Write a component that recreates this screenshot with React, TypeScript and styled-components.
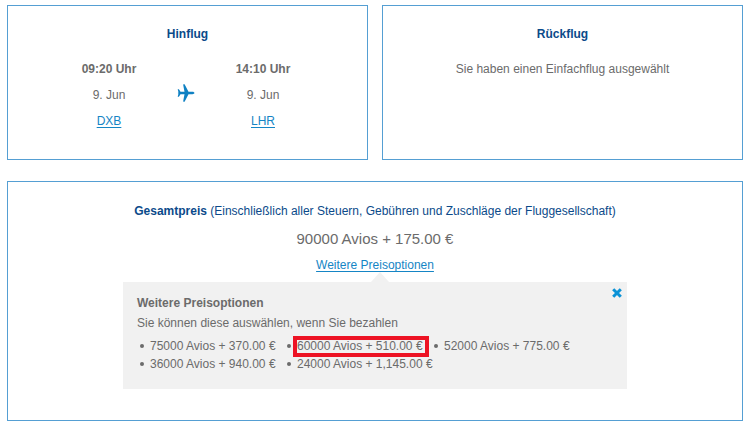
import React from "react";
import styled, { createGlobalStyle } from "styled-components";

const GlobalStyle = createGlobalStyle`
  *, *::before, *::after { box-sizing: border-box; }
  body {
    margin: 0;
    background: #fff;
    color: #6b6b6b;
    font: 12px/18px "Liberation Sans", Arial, sans-serif;
  }
  h2, h3, p, ul { margin: 0; padding: 0; }
`;

const Page = styled.main`
  display: grid;
  gap: 21px;
  padding: 5px 7px 4px;
`;

const Flights = styled.div`
  display: grid;
  grid-template-columns: 1fr 1fr;
  gap: 14px;
`;

const Card = styled.section`
  border: 1px solid #559fd3;
  padding: 18px 14px 25px;
  text-align: center;
`;

const PriceCard = styled(Card)`
  padding: 19px 14px 31px;
`;

const Title = styled.h2`
  color: #0b4a8a;
  font-size: 12px;
  line-height: 20px;
`;

const PriceTitle = styled(Title)`
  font-weight: 400;
`;

const Journey = styled.div`
  display: grid;
  grid-template-columns: 106px 48px 106px;
  justify-content: center;
  align-items: center;
  padding: 12px 3px 0 0;
`;

const Stop = styled.div`
  display: grid;
  justify-items: center;
  line-height: 26px;
`;

const Note = styled.p`
  padding-top: 12px;
  line-height: 26px;
`;

const Link = styled.a`
  color: #1585c5;
  text-decoration: underline;
  text-underline-offset: 2px;
`;

const PlaneIcon = styled.svg`
  width: 18px;
  height: 18px;
  margin-bottom: 4px;
  justify-self: center;
  fill: #0f81c3;
`;

const Price = styled.p`
  padding-top: 6px;
  font-size: 15px;
  line-height: 24px;
`;

const OptionsLink = styled.p`
  padding-top: 5px;
  line-height: 18px;
`;

const Options = styled.aside`
  position: relative;
  max-width: 504px;
  margin: 8px auto 0;
  padding: 12px 14px 16px;
  background: #f1f1f1;
  text-align: left;

  &::before {
    content: "";
    position: absolute;
    left: 248px;
    top: -10px;
    border: 9px solid transparent;
    border-top: 0;
    border-bottom: 10px solid #f1f1f1;
  }
`;

const OptionsTitle = styled.h3`
  font-size: 12px;
  line-height: 18px;
`;

const OptionsText = styled.p`
  padding-top: 2px;
  line-height: 18px;
`;

const OptionList = styled.ul`
  display: grid;
  grid-template-columns: repeat(3, 147px);
  padding-top: 5px;
  list-style: none;
`;

const Option = styled.li<{ $marked?: boolean }>`
  position: relative;
  display: flex;
  align-items: center;
  gap: 6px;
  padding-left: 3px;
  line-height: 18px;
  white-space: nowrap;

  &::before {
    content: "";
    flex: none;
    width: 4px;
    height: 4px;
    border-radius: 50%;
    background: #6b6b6b;
  }

  &::after {
    content: "";
    display: ${(p) => (p.$marked ? "block" : "none")};
    position: absolute;
    inset: -1px 2px -2px 9px;
    border: 4px solid #ed1324;
  }
`;

const CloseButton = styled.button`
  position: absolute;
  top: 6px;
  right: 5px;
  display: grid;
  padding: 0;
  border: 0;
  background: none;
  cursor: pointer;

  svg {
    width: 10px;
    height: 10px;
    stroke: #0b92d6;
    stroke-width: 3;
  }
`;

const options = [
  { label: "75000 Avios + 370.00 €" },
  { label: "60000 Avios + 510.00 €", marked: true },
  { label: "52000 Avios + 775.00 €" },
  { label: "36000 Avios + 940.00 €" },
  { label: "24000 Avios + 1,145.00 €" },
];

function FlightStop({ time, date, airport }: { time: string; date: string; airport: string }) {
  return (
    <Stop>
      <strong>{time}</strong>
      <span>{date}</span>
      <Link href={`#${airport}`}>{airport}</Link>
    </Stop>
  );
}

export default function App() {
  return (
    <>
      <GlobalStyle />
      <Page>
        <Flights>
          <Card>
            <Title>Hinflug</Title>
            <Journey>
              <FlightStop time="09:20 Uhr" date="9. Jun" airport="DXB" />
              <PlaneIcon viewBox="0 0 18 18" aria-hidden="true">
                <path d="M.7 5.3h1.2l1.6 2.4 4 .1L6.3 1.4V.2h1.3l3.9 7.6h3.9c1.3 0 2 .6 2 1.2s-.7 1.2-2 1.2h-3.9l-3.9 7.6H6.3v-1.2l1.2-6.4-4 .1-1.6 2.4H.7l.8-3.1-.8-.5.8-.5z" />
              </PlaneIcon>
              <FlightStop time="14:10 Uhr" date="9. Jun" airport="LHR" />
            </Journey>
          </Card>
          <Card>
            <Title>Rückflug</Title>
            <Note>Sie haben einen Einfachflug ausgewählt</Note>
          </Card>
        </Flights>
        <PriceCard>
          <PriceTitle>
            <strong>Gesamtpreis</strong> (Einschließlich aller Steuern, Gebühren und Zuschläge der Fluggesellschaft)
          </PriceTitle>
          <Price>90000 Avios + 175.00 €</Price>
          <OptionsLink>
            <Link href="#preisoptionen">Weitere Preisoptionen</Link>
          </OptionsLink>
          <Options id="preisoptionen">
            <CloseButton type="button" aria-label="Schließen">
              <svg viewBox="0 0 10 10" aria-hidden="true">
                <path d="M1.2 1.2l7.6 7.6M8.8 1.2l-7.6 7.6" />
              </svg>
            </CloseButton>
            <OptionsTitle>Weitere Preisoptionen</OptionsTitle>
            <OptionsText>Sie können diese auswählen, wenn Sie bezahlen</OptionsText>
            <OptionList>
              {options.map((o) => (
                <Option key={o.label} $marked={o.marked}>
                  {o.label}
                </Option>
              ))}
            </OptionList>
          </Options>
        </PriceCard>
      </Page>
    </>
  );
}
